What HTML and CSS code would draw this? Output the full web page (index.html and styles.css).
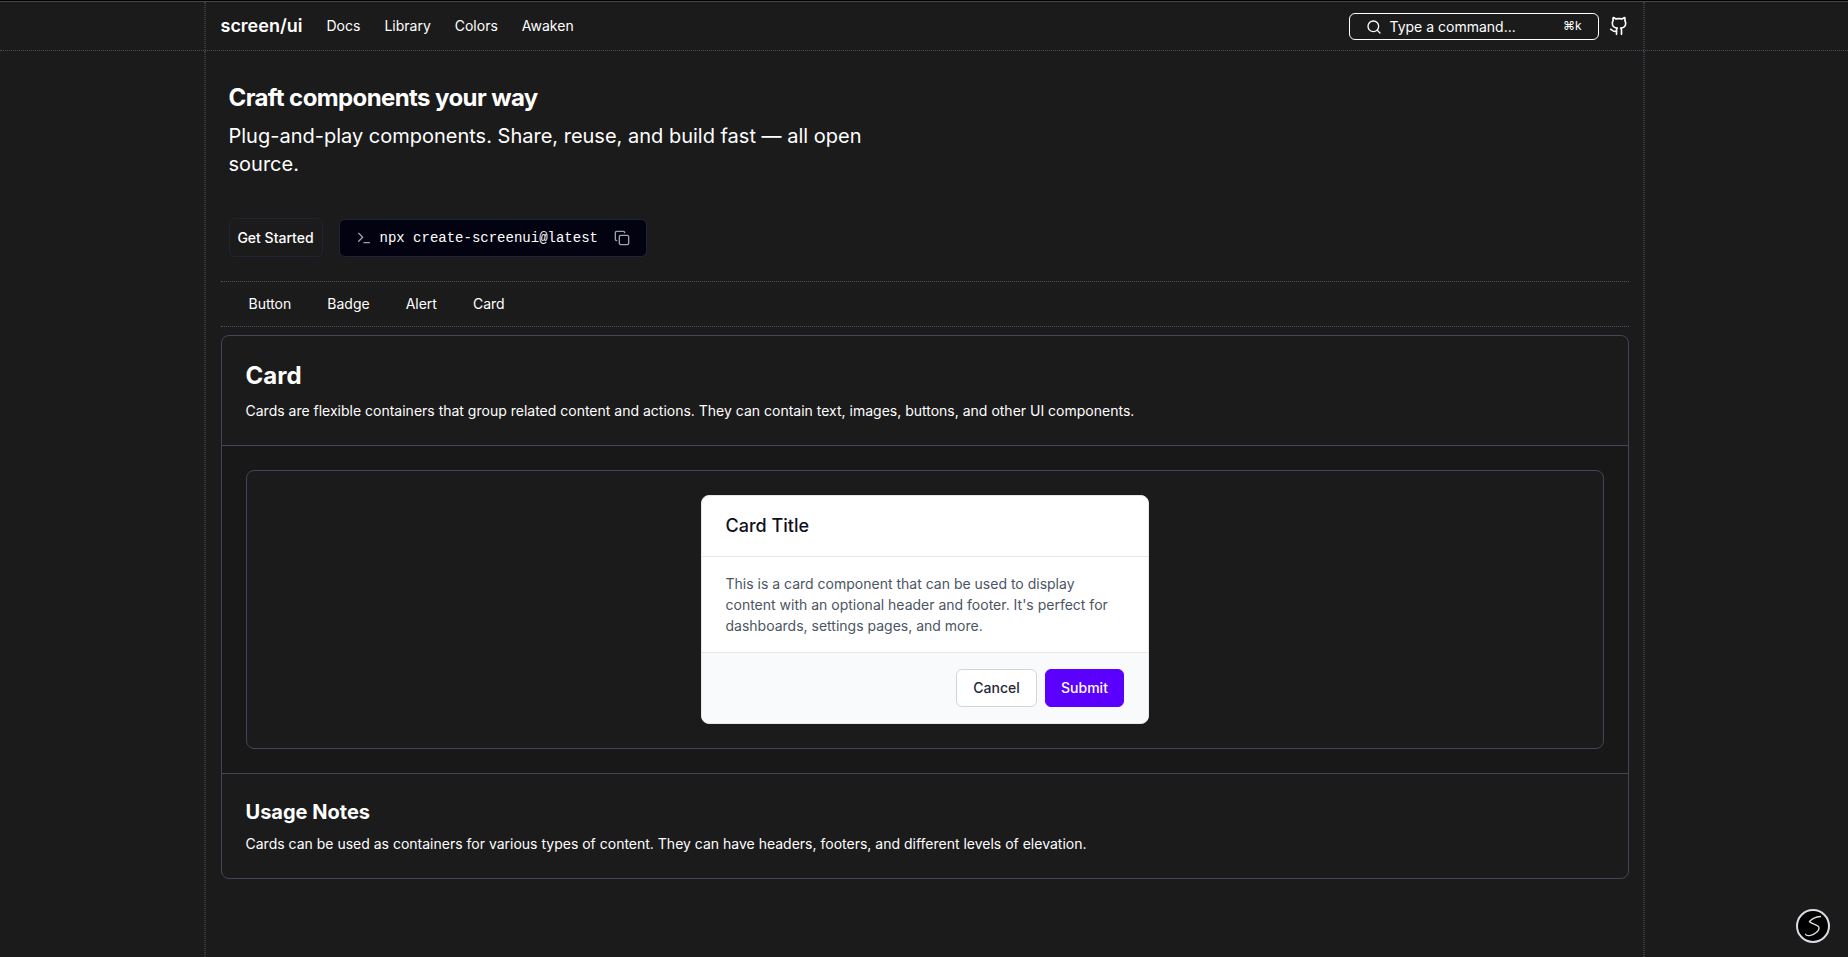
FILE: index.html
```html
<!DOCTYPE html>
<html lang="en">
<head>
<meta charset="utf-8">
<title>screen/ui</title>
<link rel="stylesheet" href="styles.css">
</head>
<body>
<header class="site-header">
  <div class="rail"><div class="header-inner">
    <nav class="nav">
      <a class="brand">screen/ui</a>
      <a class="nav-link">Docs</a>
      <a class="nav-link">Library</a>
      <a class="nav-link">Colors</a>
      <a class="nav-link">Awaken</a>
    </nav>
    <div class="actions">
      <button class="search">
        <svg class="icon" width="16" height="16" viewBox="0 0 24 24" stroke-width="2"><circle cx="11" cy="11" r="8"/><path d="m21 21-4.3-4.3"/></svg>
        <span class="search-label">Type a command...</span>
        <kbd class="shortcut">⌘k</kbd>
      </button>
      <svg class="icon" width="20" height="20" viewBox="0 0 24 24" stroke-width="2"><path d="M15 22v-4a4.8 4.8 0 0 0-1-3.5c3 0 6-2 6-5.5.08-1.25-.27-2.48-1-3.5.28-1.15.28-2.35 0-3.5 0 0-1 0-3 1.5-2.64-.5-5.36-.5-8 0C6 2 5 2 5 2c-.3 1.15-.3 2.35 0 3.5A5.403 5.403 0 0 0 4 9c0 3.5 3 5.500 6 5.500-.39.49-.68 1.050-.85 1.650-.17.6-.22 1.230-.15 1.850v4"/><path d="M9 18c-4.510 2-5-2-7-2"/></svg>
    </div>
  </div></div>
</header>
<div class="rail rail-main"><main class="page">
  <section class="hero">
    <h1 class="hero-title">Craft components your way</h1>
    <p class="hero-text">Plug-and-play components. Share, reuse, and build fast — all open source.</p>
    <div class="hero-actions">
      <button class="get-started">Get Started</button>
      <div class="command">
        <svg class="icon muted" width="16" height="16" viewBox="0 0 24 24" stroke-width="2"><path d="m4 17 6-6-6-6"/><path d="M12 19h8"/></svg>
        <code class="command-text">npx create-screenui@latest</code>
        <svg class="icon muted" width="16" height="16" viewBox="0 0 24 24" stroke-width="2"><rect x="8" y="8" width="14" height="14" rx="2"/><path d="M4 16c-1.100 0-2-.9-2-2V4c0-1.100.9-2 2-2h10c1.100 0 2 .9 2 2"/></svg>
      </div>
    </div>
  </section>
  <nav class="tabs"><a>Button</a><a>Badge</a><a>Alert</a><a>Card</a></nav>
  <section class="panel">
    <div class="panel-head">
      <h2 class="panel-title">Card</h2>
      <p class="panel-text">Cards are flexible containers that group related content and actions. They can contain text, images, buttons, and other UI components.</p>
    </div>
    <div class="preview">
      <div class="stage">
        <article class="card">
          <h3 class="card-title">Card Title</h3>
          <p class="card-body">This is a card component that can be used to display content with an optional header and footer. It's perfect for dashboards, settings pages, and more.</p>
          <footer class="card-footer">
            <button class="btn btn-outline">Cancel</button>
            <button class="btn btn-primary">Submit</button>
          </footer>
        </article>
      </div>
    </div>
    <div class="notes">
      <h3 class="notes-title">Usage Notes</h3>
      <p class="panel-text">Cards can be used as containers for various types of content. They can have headers, footers, and different levels of elevation.</p>
    </div>
  </section>
</main></div>
<div class="badge">
  <svg width="34" height="34" viewBox="0 0 34 34"><circle cx="17" cy="17" r="16" fill="#000" stroke="#dcdce4" stroke-width="2"/><path d="M24.500 7.500C21 7.800 16 9.500 13.500 12.500C14 14.500 22 15.500 23 18.500C23.500 22 18 25.500 14.500 26.300C12 26.800 10 26.300 9.500 25.300" fill="none" stroke="#dcdcdc" stroke-width="1.300" stroke-linecap="round"/></svg>
</div>
</body>
</html>
```
FILE: styles.css
```css
* { box-sizing: border-box; margin: 0; padding: 0; }
body {
  height: 957px;
  overflow: hidden;
  display: flex;
  flex-direction: column;
  border-top: 1px solid #000;
  background: #1b1b1b;
  color: #fff;
  font: 14px/20px Inter, sans-serif;
}
button { font: inherit; color: inherit; background: none; }
.icon { fill: none; stroke: currentColor; stroke-linecap: round; stroke-linejoin: round; flex: none; }
.site-header { height: 50px; border-top: 1px solid #45454c; border-bottom: 1px dotted #4a4a5a; flex: none; }

/* Doubled dotted guide lines on both sides of the content column */
.rail { width: 1441px; margin-left: 204px; border: 0 dotted #38383f; border-width: 0 1px; }
.rail-main { flex: 1; display: flex; }
.header-inner, .page { border: 0 dotted #38383f; border-width: 0 1px; }

.header-inner {
  height: 48px;
  padding: 0 14px 1px 14.500px;
  display: flex;
  align-items: center;
  justify-content: space-between;
}
.nav { display: flex; align-items: center; gap: 24px; }
.brand { font-size: 18px; line-height: 28px; font-weight: 600; }
.actions { display: flex; align-items: center; gap: 10px; }
.search {
  width: 250px;
  height: 27px;
  margin-top: 2px;
  padding: 0 16px;
  display: flex;
  align-items: center;
  border: 1px solid #fff;
  border-radius: 6px;
}
.search-label { margin-left: 7.500px; padding-top: 1px; }
.shortcut { margin: 0 0.500px 2px auto; font: 12px/16px Inter, sans-serif; }
.page { flex: 1; padding: 0 14px; }
.hero { height: 230px; padding: 31px 8.500px 0; }
.hero-title { font-size: 24px; line-height: 32px; font-weight: 700; letter-spacing: -0.6px; }
.hero-text { width: 672px; margin-top: 8px; font-size: 20px; line-height: 28px; }
.hero-actions { display: flex; align-items: flex-end; gap: 16px; margin-top: 40px; }
.get-started { width: 94px; height: 39px; border: 1px solid #1f2433; border-radius: 6px; font-weight: 500; }
.command {
  width: 308px;
  height: 38px;
  padding: 0 16px;
  display: flex;
  align-items: center;
  background: #030211;
  border: 1px solid #1e2339;
  border-radius: 6px;
}
.muted { color: #9ca3af; }
.command-text { margin: 0 16px 0 8px; font: 14px/20px "Liberation Mono", monospace; white-space: nowrap; }
.tabs {
  height: 46px;
  margin-left: 1px;
  padding: 0 27.500px;
  display: flex;
  align-items: center;
  gap: 36px;
  border-top: 1px dotted #50505f;
  border-bottom: 1px dotted #50505f;
}
.panel { margin: 8px 0 0 1px; border: 1px solid #444556; border-radius: 8px; }
.panel-head { height: 109px; padding: 24px 23.500px; }
.panel-title { font-size: 24px; line-height: 32px; font-weight: 700; }
.panel-text { margin-top: 9px; }
.preview { padding: 24px; background: #181818; border-top: 1px solid #444556; border-bottom: 1px solid #444556; }
.stage { height: 279px; padding: 24px; display: flex; justify-content: center; align-items: flex-start; background: #1b1b1b; border: 1px solid #444556; border-radius: 8px; }
.card { width: 448px; border: 1px solid #e5e7eb; border-radius: 8px; overflow: hidden; background: #fff; color: #0f1020; }
.card-title { padding: 16px 23.500px; font-size: 18px; line-height: 28px; font-weight: 500; border-bottom: 1px solid #e5e7eb; }
.card-body { padding: 16px 23.500px; line-height: 21px; color: #4b5563; }
.card-footer { padding: 16px 24px; display: flex; justify-content: flex-end; gap: 8px; background: #f9fafb; border-top: 1px solid #e5e7eb; }
.btn { height: 38px; border: 1px solid; border-radius: 6px; font-weight: 500; }
.btn-outline { width: 81px; background: #fff; border-color: #d1d5db; color: #1f2937; }
.btn-primary { width: 79px; background: #5b00ff; border-color: #5b00ff; color: #fff; }
.notes { height: 104px; padding: 24px 23.500px; }
.notes-title { font-size: 20px; line-height: 28px; font-weight: 700; }
.notes .panel-text { margin-top: 8px; }
.badge { position: fixed; left: 1796px; top: 909px; width: 34px; height: 34px; }
.badge svg { display: block; }
```
